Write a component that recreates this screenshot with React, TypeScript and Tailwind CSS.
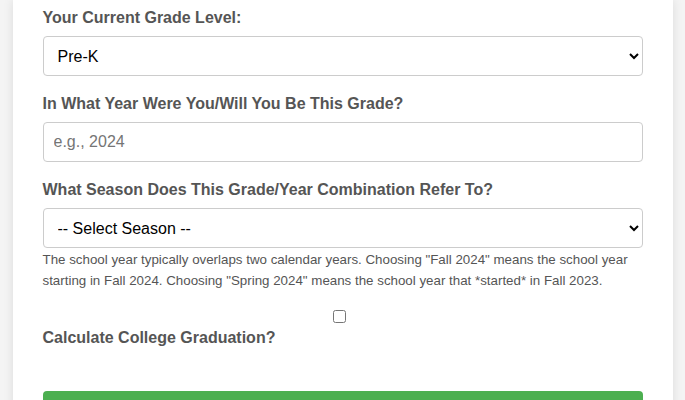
import { useState } from 'react';

export default function App() {
    const [grade, setGrade] = useState('Pre-K');
    const [season, setSeason] = useState('');
    const [year, setYear] = useState('');
    const [college, setCollege] = useState(false);

    const grades = ['Pre-K', 'Kindergarten', '1st Grade', '2nd Grade', '3rd Grade', '4th Grade', '5th Grade'];

    return (
        <div className="min-h-[400px] bg-[#f4f4f4] font-['Liberation_Sans',Arial,sans-serif]">
            <div className="mx-auto w-[660px] bg-white px-[30px] pt-[10px] pb-[40px] shadow-[0_0_10px_rgba(0,0,0,0.1)]">
                {/* Grade */}
                <div className="mb-[20px]">
                    <label className="block mb-[10px] text-[16px] leading-[16px] font-bold text-[#555]">
                        Your Current Grade Level:
                    </label>
                    <select
                        value={grade}
                        onChange={(e) => setGrade(e.target.value)}
                        className="block w-full h-[40px] px-[10px] text-[16px] text-black bg-white border border-[#ccc] rounded-[4px]"
                    >
                        {grades.map((g) => (
                            <option key={g} value={g}>{g}</option>
                        ))}
                    </select>
                </div>

                {/* Year */}
                <div className="mb-[20px]">
                    <label className="block mb-[10px] text-[16px] leading-[16px] font-bold text-[#555]">
                        In What Year Were You/Will You Be This Grade?
                    </label>
                    <input
                        type="text"
                        value={year}
                        onChange={(e) => setYear(e.target.value)}
                        placeholder="e.g., 2024"
                        className="block w-full h-[40px] px-[10px] text-[16px] text-black border border-[#ccc] rounded-[4px] placeholder:text-[#757575]"
                    />
                </div>

                {/* Season */}
                <div>
                    <label className="block mb-[10px] text-[16px] leading-[16px] font-bold text-[#555]">
                        What Season Does This Grade/Year Combination Refer To?
                    </label>
                    <select
                        value={season}
                        onChange={(e) => setSeason(e.target.value)}
                        className="block w-full h-[40px] px-[10px] text-[16px] text-black bg-white border border-[#ccc] rounded-[4px]"
                    >
                        <option value="">-- Select Season --</option>
                        <option value="fall">Fall</option>
                        <option value="spring">Spring</option>
                    </select>
                    <p className="mt-[1px] text-[13.33px] leading-[21px] text-[#555]">
                        The school year typically overlaps two calendar years. Choosing "Fall 2024" means the school year
                        starting in Fall 2024. Choosing "Spring 2024" means the school year that *started* in Fall 2023.
                    </p>
                </div>

                {/* College */}
                <div className="flex justify-center pt-[19px] pr-[6px]">
                    <input
                        type="checkbox"
                        checked={college}
                        onChange={(e) => setCollege(e.target.checked)}
                        className="w-[13px] h-[13px]"
                    />
                </div>
                <label className="block mt-[7px] text-[16px] leading-[16px] font-bold text-[#555]">
                    Calculate College Graduation?
                </label>

                <button className="block w-full mt-[45px] h-[45px] bg-[#4caf50] text-white text-[16px] font-bold rounded-[4px]">
                    Calculate
                </button>
            </div>
        </div>
    );
}
